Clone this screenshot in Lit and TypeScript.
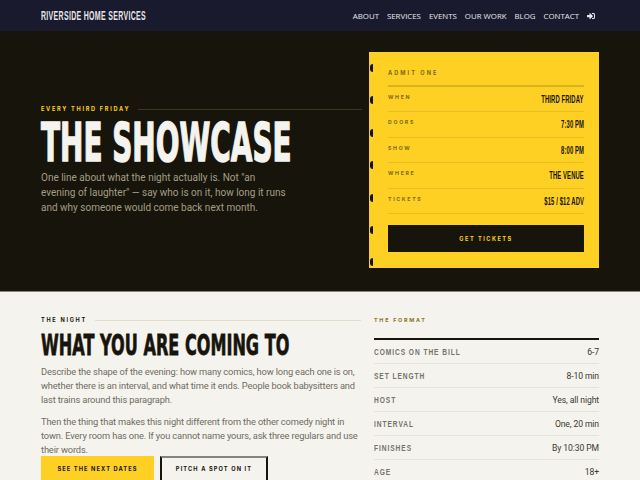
import { LitElement, html, css } from "lit";
import { customElement } from "lit/decorators.js";

const ticketRows = [
  ["WHEN", "THIRD FRIDAY"],
  ["DOORS", "7:30 PM"],
  ["SHOW", "8:00 PM"],
  ["WHERE", "THE VENUE"],
  ["TICKETS", "$15 / $12 ADV"],
];
const formatRows = [
  ["COMICS ON THE BILL", "6-7"],
  ["SET LENGTH", "8-10 min"],
  ["HOST", "Yes, all night"],
  ["INTERVAL", "One, 20 min"],
  ["FINISHES", "By 10:30 PM"],
  ["AGE", "18+"],
];
const notches = [0, 1, 2, 3, 4, 5, 6];

@customElement("app-root")
export class AppRoot extends LitElement {
  static styles = css`
    :host { display: block; width: 640px; height: 480px; overflow: hidden; font-family: "Roboto", sans-serif; background: #f5f3ee; }
    * { box-sizing: border-box; }
    .cond { display: inline-block; white-space: nowrap; font-family: "Liberation Sans", sans-serif; font-weight: 700; }
    .heavy { display: inline-block; white-space: nowrap; font-family: "DejaVu Sans", sans-serif; font-weight: 700; }

    .nav { height: 31px; background: #1a1a2e; display: flex; align-items: center; justify-content: space-between; padding: 0 41px; }
    .brand { color: #e6e6ea; font-size: 12.5px; transform: scaleX(.56); transform-origin: left center; letter-spacing: .55px; width: 107px; }
    .links { display: flex; gap: 8px; align-items: center; color: #e8e8ec; font: 400 7.85px "Open Sans", sans-serif; }
    .links svg { display: block; width: 8px; height: 8px; fill: #e8e8ec; margin-right: 4px; }

    .hero { height: 261px; background: #17150b; border-bottom: 1px solid #8a8778; padding: 21px 41px 23px; display: grid; grid-template-columns: 321px 230px; column-gap: 7px; }
    .intro { align-self: center; padding-top: 1px; }
    .eyebrow { display: flex; align-items: center; gap: 8px; font: 700 5.6px "Inter", sans-serif; letter-spacing: 1.7px; white-space: nowrap; }
    .eyebrow i { flex: 1; height: 1px; }
    .hero .eyebrow { color: #ffd024; }
    .hero .eyebrow i { background: #3a3820; }
    h1 { margin: 9px 0 0; height: 43px; line-height: 43px; font-weight: 400; color: #f5f3ee; }
    h1 .heavy { transform: scaleX(.527); transform-origin: left center; -webkit-text-stroke: 1.5px #f5f3ee; font-size: 53px; }
    .lede { margin: 6px 0 0; width: 250px; font-size: 10px; line-height: 15px; color: #a39d85; }

    .ticket { position: relative; background: #ffd024; padding: 15px 15px 16px 19px; display: flex; flex-direction: column; }
    .notch { position: absolute; left: 1px; width: 3px; height: 8px; border-radius: 3px 0 0 3px; background: #17150b; }
    .admit { font: 700 5.6px "Inter", sans-serif; letter-spacing: 2.05px; color: #7b6a1a; height: 20px; padding-top: 3px; border-bottom: 2px solid #d9b222; line-height: 7px; }
    .trow { height: 25.4px; display: flex; justify-content: space-between; border-bottom: 1px solid #e8bf22; }
    .tlabel { font: 700 5.2px "Inter", sans-serif; letter-spacing: 1.7px; color: #7b6a1a; padding-top: 7px; line-height: 7px; }
    .tval { color: #17150b; font-size: 10.5px; line-height: 12px; padding-top: 6px; transform: scaleX(.56); transform-origin: right center; letter-spacing: .2px; }
    .buy { margin-top: 11px; height: 27px; padding-top: 1px; background: #17150b; color: #ffd024; font: 700 5.6px "Inter", sans-serif; letter-spacing: 1.5px; display: flex; align-items: center; justify-content: center; }

    .body { padding: 25px 41px 0; display: grid; grid-template-columns: 320px 225px; column-gap: 13px; }
    .body .eyebrow { color: #17150b; }
    .body .eyebrow i { background: #e2dccb; }
    h2 { margin: 9px 0 0; height: 27px; line-height: 27px; font-weight: 400; color: #17150b; }
    h2 .heavy { font-size: 29px; transform: scaleX(.555); transform-origin: left center; -webkit-text-stroke: .8px #17150b; }
    .copy { margin: 6px 0 0; font-size: 9.3px; letter-spacing: -.15px; line-height: 14px; color: #6f6c60; }
    .copy + .copy { margin-top: 8px; }
    .actions { display: flex; gap: 6px; margin-top: -1px; }
    .btn { height: 30px; display: flex; align-items: center; justify-content: center; font: 700 5.7px "Inter", sans-serif; letter-spacing: 1.1px; color: #17150b; padding-bottom: 6px; }
    .primary { width: 113px; background: #ffd024; }
    .ghost { width: 108px; border: 2px solid #17150b; border-top-color: #84837c; }

    .ftitle { font: 700 5.4px "Inter", sans-serif; letter-spacing: 1.75px; color: #8a7520; line-height: 7px; height: 21px; }
    .rule { height: 2px; background: #17150b; }
    .frow { height: 24px; display: flex; justify-content: space-between; align-items: center; border-bottom: 1px solid #e6e3da; }
    .flabel { color: #75736a; font-size: 9.2px; letter-spacing: 1.3px; transform: scaleX(.72); transform-origin: left center; }
    .fval { color: #3a392f; font-size: 8.6px; letter-spacing: -.1px; }
  `;
  render() {
    return html`
      <div class="nav">
        <div class="brand cond">RIVERSIDE HOME SERVICES</div>
        <div class="links">
          <span>ABOUT</span><span>SERVICES</span><span>EVENTS</span><span>OUR WORK</span><span>BLOG</span><span>CONTACT</span>
          <svg viewBox="0 0 512 512"><path d="M416 448h-84c-6.600 0-12-5.400-12-12v-40c0-6.600 5.400-12 12-12h84c17.700 0 32-14.300 32-32V160c0-17.700-14.300-32-32-32h-84c-6.600 0-12-5.400-12-12V76c0-6.600 5.400-12 12-12h84c53 0 96 43 96 96v192c0 53-43 96-96 96zm-47-201L201 79c-15-15-41-4.500-41 17v96H24c-13.300 0-24 10.700-24 24v96c0 13.300 10.700 24 24 24h136v96c0 21.500 26 32 41 17l168-168c9.300-9.400 9.300-24.600 0-34z"/></svg>
        </div>
      </div>
      <section class="hero">
        <div class="intro">
          <div class="eyebrow"><span>EVERY THIRD FRIDAY</span><i></i></div>
          <h1><span class="heavy">THE SHOWCASE</span></h1>
          <p class="lede">One line about what the night actually is. Not "an evening of laughter" — say who is on it, how long it runs and why someone would come back next month.</p>
        </div>
        <div class="ticket">
          ${notches.map((n) => html`<span class="notch" style="top:${12 + n * 32.4}px"></span>`)}
          <div class="admit">ADMIT ONE</div>
          ${ticketRows.map(([l, v]) => html`<div class="trow"><span class="tlabel">${l}</span><span class="tval cond">${v}</span></div>`)}
          <div class="buy">GET TICKETS</div>
        </div>
      </section>
      <section class="body">
        <div>
          <div class="eyebrow"><span>THE NIGHT</span><i></i></div>
          <h2><span class="heavy">WHAT YOU ARE COMING TO</span></h2>
          <p class="copy">Describe the shape of the evening: how many comics, how long each one is on, whether there is an interval, and what time it ends. People book babysitters and last trains around this paragraph.</p>
          <p class="copy">Then the thing that makes this night different from the other comedy night in town. Every room has one. If you cannot name yours, ask three regulars and use their words.</p>
          <div class="actions"><div class="btn primary">SEE THE NEXT DATES</div><div class="btn ghost">PITCH A SPOT ON IT</div></div>
        </div>
        <div>
          <div class="ftitle">THE FORMAT</div>
          <div class="rule"></div>
          ${formatRows.map(([l, v]) => html`<div class="frow"><span class="flabel cond">${l}</span><span class="fval">${v}</span></div>`)}
        </div>
      </section>
    `;
  }
}
